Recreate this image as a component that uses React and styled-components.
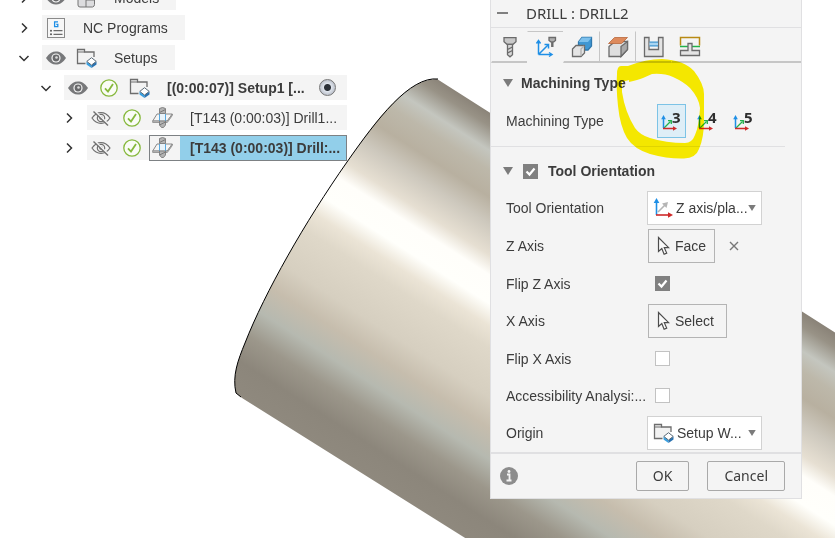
import React, { useState } from "react";
import styled, { createGlobalStyle } from "styled-components"

const Colors = {
  panel: '#f4f4f4',
  line: '#e0e0e2',
  text: '#3c3c3c',
  grey: '#808080',
  blue: '#1e8fe6',
  green: '#22b24c',
  red: '#cf2a2a',
  selected: '#92cfea',
  marker: '#fff200'
}

const INDENTS = [12, 34, 57];

const browserRows = [
  { id: 'models', level: 0, name: 'Models', eye: 'on', icon: 'model' },
  { id: 'nc', level: 0, name: 'NC Programs', icon: 'nc' },
  { id: 'setups', level: 0, name: 'Setups', eye: 'on', icon: 'folder', open: true },
  { id: 'setup1', level: 1, name: '[(0:00:07)] Setup1 [...', eye: 'on', check: true, icon: 'folder', open: true, bold: true, radio: true },
  { id: 'drill1', level: 2, name: '[T143 (0:00:03)] Drill1...', eye: 'off', check: true, icon: 'drill' },
  { id: 'drill2', level: 2, name: '[T143 (0:00:03)] Drill:...', eye: 'off', check: true, icon: 'drill', bold: true }
]

const tabs = ['Tool', 'Geometry', 'Heights', 'Passes', 'Linking', 'Clearance']

const GlobalStyle = createGlobalStyle`
  * {
    box-sizing: border-box;
  }

  body {
    margin: 0;
    background: #fff;
    color: ${Colors.text};
    font-family: "Liberation Sans", Arial, sans-serif;
    font-size: 14px;
  }

  button, input, select {
    font: inherit;
    color: inherit;
  }
`

/* icons */

const Chevron = ({ open }) => (
  <svg width="12" height="12" viewBox="0 0 12 12" fill="none" stroke="#333" strokeWidth="1.5">
    <path d={open ? "M1.500 4L6 8.500 10.500 4" : "M4 1.500L8.500 6 4 10.500"} />
  </svg>
)

const Eye = () => (
  <svg width="20" height="14" viewBox="0 0 20 14">
    <path d="M0 7C3 2.400 6.300 .5 10 .5S17 2.400 20 7c-3 4.600-6.300 6.500-10 6.500S3 11.600 0 7z" fill="#77787a" />
    <circle cx="10" cy="7" r="4.600" fill="#f4f4f4" />
    <circle cx="10" cy="7" r="3.400" fill="#696a6c" />
    <circle cx="10.500" cy="6.500" r="1.300" fill="#ddd" />
  </svg>
)

const EyeOff = () => (
  <svg width="20" height="16" viewBox="0 0 20 16" fill="none" stroke="#707070" strokeWidth="1.200">
    <path d="M1 8c2.500-3.700 5.400-5.400 9-5.400S16.500 4.300 19 8c-2.500 3.700-5.400 5.400-9 5.400S3.500 11.700 1 8z" />
    <circle cx="10" cy="8" r="3.700" />
    <circle cx="10" cy="8" r="1.200" />
    <path d="M3.500 1l14.500 14" stroke="#f4f4f4" strokeWidth="2" />
    <path d="M2.500 1.500L17 15.500" strokeWidth="1.400" />
  </svg>
)

const Check = () => (
  <svg width="18" height="18" viewBox="0 0 18 18" fill="none" stroke="#86b83c">
    <circle cx="9" cy="9" r="8.200" strokeWidth="1.300" fill="#fafcf6" />
    <path d="M5 9.300l3 3.200 5-7.500" strokeWidth="1.800" />
  </svg>
)

const Folder = () => (
  <svg width="21" height="20" viewBox="0 0 21 20">
    <path d="M9.500 15.500H1.500V1.500h7v2.500h9.500v5" fill="#f2f2f2" stroke="#6d6d6d" strokeWidth="1.300" />
    <path d="M1.500 4h7" stroke="#6d6d6d" />
    <path d="M10.500 13.500L15.500 17v3l-5-3.500z" fill="#3aa0e0" />
    <path d="M20.500 13.500L15.500 17v3l5-3.500z" fill="#2a72b0" />
    <path d="M15.500 9.700l4.700 3.700-4.700 3.700-4.700-3.700z" fill="#fff" stroke="#5b6b78" />
  </svg>
)

const Model = () => (
  <svg width="19" height="20" viewBox="0 0 19 20" fill="#dcdcde" stroke="#757575">
    <path d="M1 6l3-4h13.500v14.500q0 2-2 2.500H3q-2 0-2-2z" />
    <path d="M9 6v13M9 12h8.500" fill="none" />
  </svg>
)

const NcProgram = () => (
  <svg width="18" height="20" viewBox="0 0 18 20">
    <rect x=".5" y=".5" width="17" height="19" fill="#f7f7f7" stroke="#8a8a8a" />
    <path d="M11 3.800H7.600v4.900h3.200V6.300H9.300" fill="none" stroke={Colors.blue} strokeWidth="1.300" />
    <path d="M6.500 12.700h9M6.500 16.300h9" stroke="#6b6b6b" strokeWidth="1.200" />
    <circle cx="4" cy="12.700" r="1" fill="#555" />
    <circle cx="4" cy="16.300" r="1" fill="#555" />
  </svg>
)

const Drill = () => (
  <svg width="21" height="21" viewBox="0 0 21 21">
    <path d="M.7 14L5 7h15.300l-5 7z" fill="#f6f6f6" stroke="#888" />
    <path d="M.7 14v1.500h14.600l5-7V7l-5 7z" fill="#c8c8c8" stroke="#888" strokeWidth=".8" />
    <path d="M7.500 6.500h6v7h-6z" fill="#e8f3fa" />
    <path d="M7.500 7v7M13.500 7v7" stroke="#58a9df" />
    <path d="M7.500 1.500q3-2 6 0v5h-6zM7.500 14h6v4l-2 2.500h-2l-2-2.500z" fill="#b3b3b3" stroke="#7a7a7a" strokeWidth=".9" />
    <path d="M7.500 5.500l6-3M7.500 18l6-3" stroke="#7a7a7a" />
  </svg>
)

const Cursor = () => (
  <svg width="13" height="20" viewBox="0 0 13 20">
    <path d="M1.500 1.500v14l3.300-3 2.300 5.800 2.600-1.200-2.400-5.400h4.400z" fill="#fafafa" stroke="#4c4c4c" strokeWidth="1.200" />
  </svg>
)

const Axes = () => (
  <svg width="20" height="20" viewBox="0 0 20 20" fill="none">
    <path d="M5 14L12 7" stroke="#b5b5b5" strokeWidth="1.600" />
    <path d="M15 4l-1.500 6L9 5.500z" fill="#b5b5b5" />
    <path d="M3.500 17V4" stroke={Colors.blue} strokeWidth="1.600" />
    <path d="M3.500 0L.7 5h5.600z" fill={Colors.blue} />
    <path d="M3 17h12" stroke={Colors.red} strokeWidth="1.600" />
    <path d="M20 17l-5-2.800v5.600z" fill={Colors.red} />
  </svg>
)

const AxisCount = ({ count }) => (
  <svg width="29" height="34" viewBox="0 0 29 34" fill="none">
    <path d="M7 24l6.500-6.500" stroke={Colors.green} strokeWidth="1.300" />
    <path d="M11 16.700h3.300V20" stroke={Colors.green} strokeWidth="1.300" />
    <path d="M6.500 24V14" stroke={Colors.blue} strokeWidth="1.500" />
    <path d="M6.500 11L4.200 15.200h4.600z" fill={Colors.blue} />
    <path d="M6 24.500h10" stroke={Colors.red} strokeWidth="1.500" />
    <path d="M20 24.500l-4-2.300v4.600z" fill={Colors.red} />
    <text x="15" y="19" fill="#2e2e2e" fontFamily="Noto Sans, sans-serif" fontSize="15" fontWeight="700">{count}</text>
  </svg>
)

const TabIcon = ({ name }) => (
  <svg width="22" height="22" viewBox="0 0 22 22" fill="none" stroke="#6b6b6b" strokeWidth="1.300">
    {name === 'Tool' && <>
      <path d="M5 1.700h12v4l-3 2.600H8l-3-2.600z" fill="#c9c9c9" />
      <path d="M8.500 8.300h5v10.500l-2.500 2-2.500-2z" fill="#d8d8d8" />
      <path d="M8.500 13.500l5-2.500M8.500 17l5-2.500" />
    </>}
    {name === 'Geometry' && <>
      <g stroke={Colors.blue} strokeWidth="1.500">
        <path d="M3.500 18.500V6M3.500 18.500H16M3.500 18.500L13 9" />
        <path d="M1.500 7.500l2-3 2 3M14 16.500l3 2-3 2M9.500 8.500h4v4" />
      </g>
      <path d="M14 1.500h6.500v3l-1.700 1.300h-3L14 4.500z" fill="#b0b0b0" />
      <path d="M17.300 6v5" strokeWidth="2.400" />
    </>}
    {name === 'Heights' && <>
      <path d="M7.500 6L11 1.500h9.500V10L17 14H7.500z" fill="#3f97d3" stroke="#2f78ad" />
      <path d="M7.500 6H17l3.500-4.500H11z" fill="#7cc0ec" stroke="none" />
      <path d="M1.500 13L5 9.500h8.500V17L10 20.500H1.500z" fill="#e4e4e4" />
      <path d="M10 20V13l3-3" stroke="#b0b0b0" />
    </>}
    {name === 'Passes' && <>
      <path d="M2 10.500L8 5.500h12.500v8L14 20.500H2z" fill="#dedede" />
      <path d="M14 10.500l6.500-5v8L14 20.500z" fill="#a9a9a9" />
      <path d="M1.500 7.500l6-6H20.500l-6 6z" fill="#dd8a5c" stroke="#b9683c" strokeWidth=".8" />
    </>}
    {name === 'Linking' && <>
      <path d="M1.500 1.500H6v12h9.500v-12H20v19H1.500z" fill="#e4e4e4" />
      <path d="M6.500 6.500h8.500v3H6.500z" fill="#a8d5f2" stroke="none" />
      <path d="M6.500 6.200h8.500M6.500 9.800h8.500" stroke="#3b93cf" />
    </>}
    {name === 'Clearance' && <>
      <path d="M1.500 9.500v-8h19v8" stroke="#b88a14" strokeWidth="1.500" />
      <path d="M1 10.500h20" stroke={Colors.green} strokeWidth="1.500" />
      <path d="M9 7.500h4v7h7.500v5h-19v-5H9z" fill="#e4e4e4" />
    </>}
  </svg>
)

const Triangle = ({ small }) => (
  <svg width={small ? 8 : 10} height={small ? 6 : 8} viewBox="0 0 10 8"><path d="M0 0h10L5 8z" fill="#7b7b7b" /></svg>
)

const icons = { model: Model, nc: NcProgram, folder: Folder, drill: Drill }

/* shaded part in the viewport */

const Part = () => (
  <StyledPart viewBox="0 0 835 538" preserveAspectRatio="xMidYMid slice" aria-hidden="true">
    <defs>
      <linearGradient id="steel" gradientUnits="userSpaceOnUse" x1="437" y1="79" x2="235" y2="394">
        <stop offset="0" stopColor="#8b8479" />
        <stop offset=".03" stopColor="#989286" />
        <stop offset=".085" stopColor="#c4c6bf" />
        <stop offset=".13" stopColor="#bdb8aa" />
        <stop offset=".19" stopColor="#b8b0a0" />
        <stop offset=".25" stopColor="#cdc8bd" />
        <stop offset=".32" stopColor="#e6dfd2" />
        <stop offset=".365" stopColor="#fffefa" />
        <stop offset=".43" stopColor="#fffffb" />
        <stop offset=".48" stopColor="#ebe4d6" />
        <stop offset=".53" stopColor="#dfd8c9" />
        <stop offset=".64" stopColor="#d6cfc0" />
        <stop offset=".71" stopColor="#c6bdad" />
        <stop offset=".78" stopColor="#b6b9b0" />
        <stop offset=".85" stopColor="#9c978b" />
        <stop offset=".92" stopColor="#8c867b" />
        <stop offset="1" stopColor="#8f897e" />
      </linearGradient>
    </defs>
    <path fill="url(#steel)" d="M437 79L900 374V600H564L242 398L236 393C232 376 238 360 245 343C265 292 305 222 347 162C377 119 405 80 437 79z" />
    <path fill="none" stroke="#000" d="M438 79C410 76 377 119 347 162C305 222 265 292 245 343C238 360 232 376 236 393L241 397" />
  </StyledPart>
)

const Marker = () => (
  <StyledMarker viewBox="610 56 100 108" aria-hidden="true">
    <path
      fill={Colors.marker}
      fillRule="evenodd"
      d="M617 74Q617 66 621 66H628V66Q646 59 662 59Q684 60 694 71Q704 84 704 94V120Q704 138 699 149Q696 158 684 158.500Q668 159 650 154Q634 149 627 138Q620 126 618 106Q616 88 617 74z
      M622 82L629 80V82Q638 80 643 78L652 74Q664 73 673 77Q684 82 690 88Q699 98 700 108Q699 126 695 135Q692 143 685 143Q666 143 650 138Q640 135 635 128Q625 112 622 92z"
    />
  </StyledMarker>
)

const BrowserRow = ({ row, selected, onSelect }) => {
  const Icon = icons[row.icon]
  const nested = row.level > 0

  return (
    <StyledRow $level={row.level}>
      <StyledToggle aria-label={`Expand ${row.name}`} aria-expanded={!!row.open}>
        <Chevron open={row.open} />
      </StyledToggle>
      <StyledRowBody $nested={nested}>
        {row.eye && <StyledStatus aria-label="Visibility">{row.eye === 'on' ? <Eye /> : <EyeOff />}</StyledStatus>}
        {row.check && <StyledStatus as="span"><Check /></StyledStatus>}
        <StyledEntry $selected={selected} $bold={row.bold} onClick={() => onSelect(row.id)}>
          <StyledEntryIcon><Icon /></StyledEntryIcon>
          <StyledEntryName $selected={selected} $nested={nested}>{row.name}</StyledEntryName>
        </StyledEntry>
        {row.radio && <StyledRadio type="radio" name="active-setup" aria-label="Active setup" defaultChecked />}
      </StyledRowBody>
    </StyledRow>
  )
}

const Dropdown = ({ id, icon, value }) => (
  <StyledDropdown>
    {icon}
    <select id={id} defaultValue={value}>
      <option>{value}</option>
    </select>
    <Triangle small />
  </StyledDropdown>
)

const App = () => {
  const [selected, setSelected] = useState('drill2')
  const [tab, setTab] = useState('Geometry')
  const [axes, setAxes] = useState(3)

  return (
    <StyledViewport>
      <GlobalStyle />
      <Part />
      <StyledBrowser>
        {browserRows.map(row => (
          <BrowserRow key={row.id} row={row} selected={selected === row.id} onSelect={setSelected} />
        ))}
      </StyledBrowser>

      <StyledDialog>
        <StyledTitleBar>
          <StyledMinimize aria-label="Minimize" />
          <StyledTitle>DRILL : DRILL2</StyledTitle>
        </StyledTitleBar>

        <StyledTabs role="tablist">
          {tabs.map(name => (
            <StyledTab key={name} role="tab" aria-label={name} aria-selected={tab === name} $divided={name === 'Passes' || name === 'Linking'} onClick={() => setTab(name)}>
              <TabIcon name={name} />
            </StyledTab>
          ))}
        </StyledTabs>

        <StyledSection $divider>
          <StyledSectionHead><Triangle />Machining Type</StyledSectionHead>
          <StyledField>
            <span id="machining">Machining Type</span>
            <StyledAxisGroup role="radiogroup" aria-labelledby="machining">
              {[3, 4, 5].map(n => (
                <StyledAxisOption key={n} $on={axes === n}>
                  <input type="radio" name="axes" checked={axes === n} onChange={() => setAxes(n)} />
                  <AxisCount count={n} />
                </StyledAxisOption>
              ))}
            </StyledAxisGroup>
          </StyledField>
        </StyledSection>

        <StyledSection>
          <StyledSectionHead>
            <Triangle />
            <StyledCheckbox id="use-orientation" type="checkbox" defaultChecked />
            <label htmlFor="use-orientation">Tool Orientation</label>
          </StyledSectionHead>
          <StyledFields>
            <StyledField>
              <label htmlFor="orientation">Tool Orientation</label>
              <Dropdown id="orientation" icon={<Axes />} value="Z axis/pla..." />
            </StyledField>
            <StyledField>
              <label htmlFor="z-axis">Z Axis</label>
              <StyledPicks>
                <StyledPick id="z-axis"><Cursor />Face</StyledPick>
                <StyledClear aria-label="Clear Z axis">
                  <svg width="10" height="10" viewBox="0 0 10 10" stroke="#777" strokeWidth="1.400"><path d="M1 1l8 8M9 1L1 9" /></svg>
                </StyledClear>
              </StyledPicks>
            </StyledField>
            <StyledField $check>
              <label htmlFor="flip-z">Flip Z Axis</label>
              <StyledCheckbox id="flip-z" type="checkbox" defaultChecked />
            </StyledField>
            <StyledField>
              <label htmlFor="x-axis">X Axis</label>
              <StyledPicks>
                <StyledPick id="x-axis" $empty><Cursor />Select</StyledPick>
              </StyledPicks>
            </StyledField>
            <StyledField $check>
              <label htmlFor="flip-x">Flip X Axis</label>
              <StyledCheckbox id="flip-x" type="checkbox" />
            </StyledField>
            <StyledField $check>
              <label htmlFor="access">Accessibility Analysi:...</label>
              <StyledCheckbox id="access" type="checkbox" />
            </StyledField>
            <StyledField>
              <label htmlFor="origin">Origin</label>
              <Dropdown id="origin" icon={<Folder />} value="Setup W..." />
            </StyledField>
          </StyledFields>
        </StyledSection>

        <StyledFooter>
          <svg width="18" height="18" viewBox="0 0 18 18" role="img" aria-label="Info">
            <circle cx="9" cy="9" r="9" fill="#8c8c8c" />
            <path d="M7 7.500h2.500v6M6.500 13.500h5" stroke="#f4f4f4" strokeWidth="1.800" fill="none" />
            <circle cx="9" cy="4.500" r="1.400" fill="#f4f4f4" />
          </svg>
          <StyledAction>OK</StyledAction>
          <StyledAction>Cancel</StyledAction>
        </StyledFooter>
        <Marker />
      </StyledDialog>
    </StyledViewport>
  )
}

const StyledViewport = styled.main`
  position: relative;
  display: flex;
  justify-content: space-between;
  align-items: flex-start;
  min-height: 100vh;
  overflow: hidden;
`

const StyledPart = styled.svg`
  position: absolute;
  inset: 0;
  width: 100%;
  height: 100%;
`

const StyledBrowser = styled.ul`
  position: relative;
  display: grid;
  gap: 5px;
  width: 347px;
  margin: -15px 0 0;
  padding: 0;
  list-style: none;
`

const StyledRow = styled.li`
  display: flex;
  align-items: center;
  gap: 6px;
  height: 25px;
  padding-left: ${props => INDENTS[props.$level]}px;
`

const PlainButton = styled.button`
  display: flex;
  align-items: center;
  padding: 0;
  border: none;
  background: none;
  cursor: pointer;
`

const StyledToggle = styled(PlainButton)`
  flex: none;
  justify-content: center;
  width: 24px;
  height: 25px;
`

const StyledRowBody = styled.div`
  display: flex;
  flex: ${props => props.$nested ? '1' : 'none'};
  align-items: center;
  height: 25px;
  background: ${Colors.panel};
`

const StyledStatus = styled(PlainButton)`
  display: flex;
  flex: none;
  justify-content: center;
  width: 31px;
  padding-right: 4px;
`

const StyledEntry = styled(PlainButton)`
  flex: 1;
  height: 26px;
  font-weight: ${props => props.$bold ? '700' : '400'};
  outline: ${props => props.$selected ? '1px solid #7d8184' : 'none'};
  outline-offset: -1px;
`

const StyledEntryIcon = styled.span`
  display: flex;
  flex: none;
  justify-content: center;
  width: 31px;
  padding-right: 4px;
`

const StyledEntryName = styled.span`
  flex: 1;
  margin: 1px 1px 1px 0;
  padding: 0 ${props => props.$nested ? '0' : '16px'} 0 10px;
  line-height: 24px;
  text-align: left;
  white-space: nowrap;
  background: ${props => props.$selected ? Colors.selected : 'none'};
`

const StyledRadio = styled.input`
  appearance: none;
  flex: none;
  width: 17px;
  height: 17px;
  margin: 0 11px 0 0;
  border: 1px solid #777;
  border-radius: 50%;
  background: radial-gradient(circle, #2c3138 0 3px, #dfe4ec 4px, #b9bec8 8px);
`

const StyledDialog = styled.section`
  position: relative;
  flex: none;
  width: 312px;
  margin-right: 33px;
  border: 1px solid ${Colors.line};
  border-top: none;
  background: ${Colors.panel};
`

const StyledTitleBar = styled.header`
  display: flex;
  align-items: center;
  gap: 18px;
  height: 28px;
  padding: 0 6px 2px;
  border-bottom: 1px solid ${Colors.line};
`

const StyledMinimize = styled(PlainButton)`
  width: 11px;
  height: 2px;
  background: ${Colors.grey};
`

const StyledTitle = styled.h1`
  margin: 0;
  font: 400 15px/26px "Noto Sans", sans-serif;
`

const StyledTabs = styled.div`
  display: flex;
  height: 35px;
  padding-top: 3px;

  &:after {
    content: '';
    flex: 1;
    border-bottom: 2px solid #c6c6c6;
  }
`

const StyledTab = styled(PlainButton)`
  justify-content: center;
  width: 36px;
  border-top: 1px solid transparent;
  border-bottom: 2px solid #c6c6c6;
  border-left: 1px solid ${props => props.$divided ? '#c6c6c6' : 'transparent'};

  &[aria-selected="true"] {
    border-top-color: #c6c6c6;
    border-bottom-color: transparent;
  }
`

const StyledSection = styled.div`
  display: grid;
  gap: ${props => props.$divider ? '1px' : '0'};
  padding-top: ${props => props.$divider ? '0' : '4px'};
  padding-bottom: ${props => props.$divider ? '8px' : '2px'};
  margin-right: 16px;
  border-bottom: ${props => props.$divider ? `1px solid ${Colors.line}` : 'none'};
`

const StyledSectionHead = styled.h2`
  display: flex;
  align-items: center;
  gap: 8px;
  height: 40px;
  margin: 0;
  padding-left: 12px;
  font-size: 14px;
  font-weight: 700;

  & > input {
    margin: 0 2px;
  }
`

const StyledFields = styled.div`
  display: grid;
  gap: 4px;
`

const StyledField = styled.div`
  display: grid;
  grid-template-columns: 141px 1fr;
  align-items: center;
  height: ${props => props.$check ? '33px' : '34px'};
  padding-left: 15px;
  white-space: nowrap;

  & > input {
    margin-left: 8px;
  }
`

const StyledAxisGroup = styled.div`
  display: flex;
  gap: 7px;
  padding-left: 10px;
`

const StyledAxisOption = styled.label`
  display: flex;
  background: ${props => props.$on ? '#deeef7' : 'none'};
  box-shadow: ${props => props.$on ? 'inset 0 0 0 1px #7cc3e6' : 'none'};
  cursor: pointer;

  & > input {
    position: absolute;
    opacity: 0;
    pointer-events: none;
  }
`

const StyledCheckbox = styled.input`
  appearance: none;
  width: 15px;
  height: 15px;
  margin: 0;
  border: 1px solid #c2c2c2;
  background: #fff;

  &:checked {
    border-color: ${Colors.grey};
    background: ${Colors.grey} url("data:image/svg+xml,%3Csvg xmlns='http://www.w3.org/2000/svg' viewBox='0 0 13 13'%3E%3Cpath d='M2.500 6.500l3 3 5-6' fill='none' stroke='white' stroke-width='2.200'/%3E%3C/svg%3E");
  }
`

const StyledDropdown = styled.div`
  display: flex;
  align-items: center;
  width: 115px;
  height: 34px;
  padding: 0 5px;
  border: 1px solid #d2d2d2;
  background: #fff;

  & > svg {
    flex: none;
  }

  & > select {
    flex: 1;
    min-width: 0;
    padding: 0 0 0 3px;
    border: none;
    background: none;
    appearance: none;
  }
`

const StyledPicks = styled.div`
  display: flex;
  align-items: center;
  gap: 14px;
  padding-left: 1px;
`

const StyledPick = styled(PlainButton)`
  gap: 5px;
  height: 34px;
  padding: 0 ${props => props.$empty ? '12px' : '8px'} 0 8px;
  border: 1px solid #b4b4b4;
`

const StyledClear = styled(PlainButton)`
  height: 20px;
`

const StyledFooter = styled.footer`
  display: flex;
  align-items: center;
  gap: 18px;
  height: 46px;
  padding: 0 16px 0 9px;
  border-top: 2px solid ${Colors.line};

  & > svg {
    margin-right: auto;
  }
`

const StyledAction = styled.button`
  height: 30px;
  padding: 0 16px;
  border: 1px solid #a9a9a9;
  border-radius: 2px;
  background: none;
  font: 400 14px/20px "Noto Sans", sans-serif;
  cursor: pointer;
`

const StyledMarker = styled.svg`
  position: absolute;
  top: 56px;
  left: 119px;
  width: 100px;
  height: 108px;
  mix-blend-mode: multiply;
  pointer-events: none;
`

export default App;
